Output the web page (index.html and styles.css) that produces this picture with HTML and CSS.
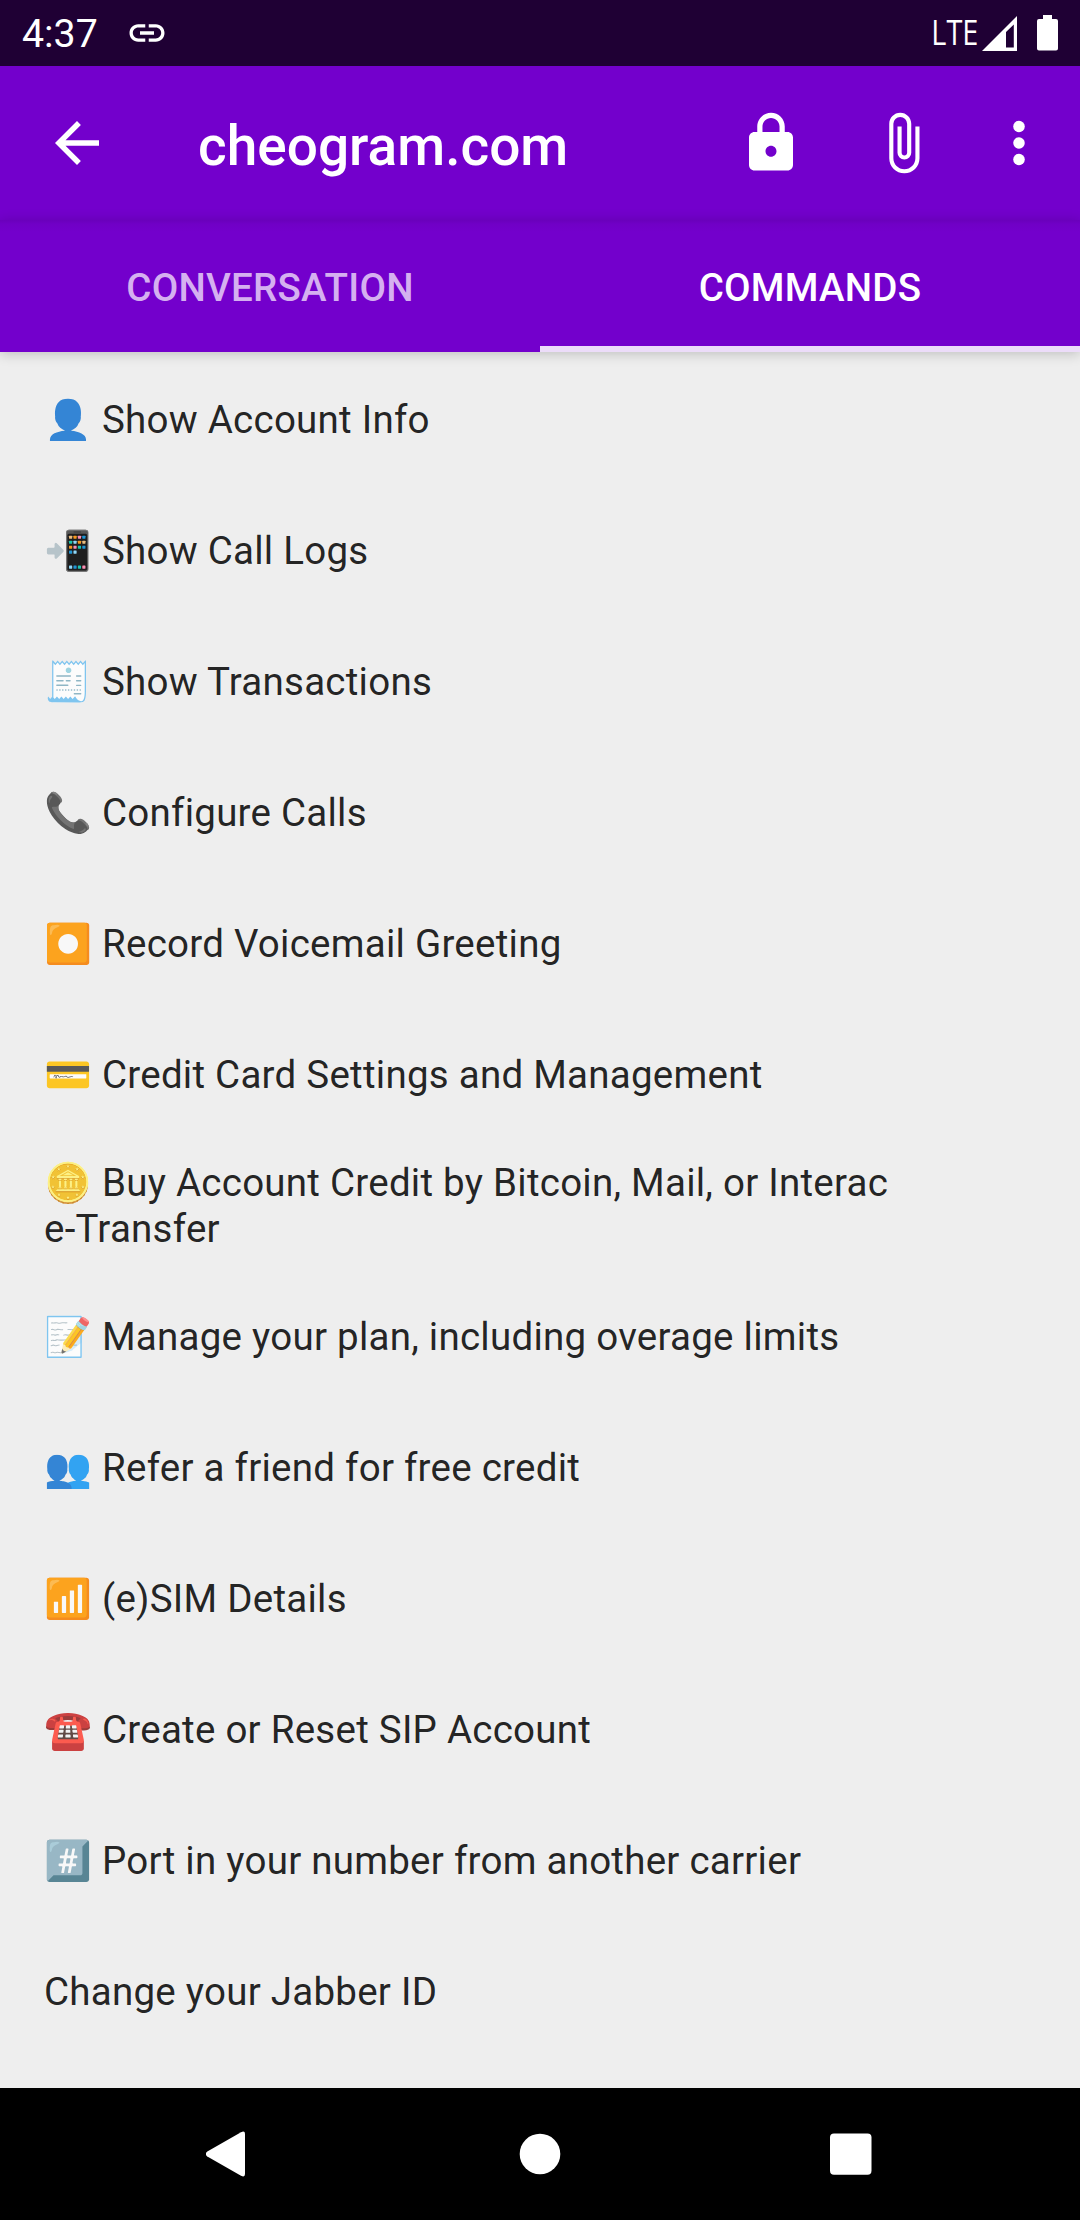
FILE: index.html
```html
<!DOCTYPE html>
<html lang="en">
<head>
<meta charset="utf-8">
<title>cheogram.com</title>
<link rel="stylesheet" href="styles.css">
</head>
<body>
<header class="status">
  <span class="clock">4:37</span>
  <svg class="link" viewBox="0 0 24 24"><path d="M3.900 12c0-1.710 1.390-3.100 3.100-3.100h4V7H7c-2.760 0-5 2.240-5 5s2.240 5 5 5h4v-1.900H7c-1.710 0-3.100-1.390-3.100-3.100zM8 13h8v-2H8v2zm9-6h-4v1.900h4c1.710 0 3.100 1.390 3.100 3.100s-1.390 3.100-3.100 3.100h-4V17h4c2.760 0 5-2.240 5-5s-2.240-5-5-5z"/></svg>
  <span class="lte">LTE</span>
  <svg class="signal" viewBox="0 0 35 35"><path fill-rule="evenodd" d="M0 35 35 0V35ZM24 31.500H31.800V8.500L24 16Z"/></svg>
  <svg class="battery" viewBox="0 0 21 36"><path d="M6 0h9v4h4a2 2 0 0 1 2 2v27.500a2 2 0 0 1-2 2H2a2 2 0 0 1-2-2V6a2 2 0 0 1 2-2h4z"/></svg>
</header>
<div class="toolbar">
  <svg class="icon" viewBox="0 0 24 24"><path d="M20 11H7.830l5.590-5.590L12 4l-8 8 8 8 1.410-1.410L7.830 13H20v-2z"/></svg>
  <h1 class="title">cheogram.com</h1>
  <svg class="icon lock" viewBox="0 0 24 24"><path d="M18 8h-1V6c0-2.760-2.240-5-5-5S7 3.240 7 6v2H6c-1.100 0-2 .9-2 2v10c0 1.100.9 2 2 2h12c1.100 0 2-.9 2-2V10c0-1.100-.9-2-2-2zm-6 9c-1.100 0-2-.9-2-2s.9-2 2-2 2 .9 2 2-.9 2-2 2zm3.100-9H8.900V6c0-1.710 1.390-3.100 3.100-3.100s3.100 1.390 3.100 3.100v2z"/></svg>
  <svg class="icon clip" viewBox="0 0 24 24"><path d="M16.500 6v11.500c0 2.210-1.790 4-4 4s-4-1.790-4-4V5a2.500 2.500 0 0 1 5 0v10.500c0 .55-.45 1-1 1s-1-.45-1-1V6H10v9.500a2.500 2.500 0 0 0 5 0V5c0-2.210-1.790-4-4-4S7 2.790 7 5v12.500c0 3.040 2.460 5.500 5.500 5.500s5.500-2.460 5.500-5.500V6h-1.500z"/></svg>
  <svg class="icon" viewBox="0 0 24 24"><circle cx="12" cy="6" r="2.100"/><circle cx="12" cy="12" r="2.100"/><circle cx="12" cy="18" r="2.100"/></svg>
</div>
<nav class="tabs">
  <span class="tab">CONVERSATION</span>
  <span class="tab active">COMMANDS</span>
</nav>
<main class="list">
  <div class="row"><p>👤 Show Account Info</p></div>
  <div class="row"><p>📲 Show Call Logs</p></div>
  <div class="row"><p>🧾 Show Transactions</p></div>
  <div class="row"><p>📞 Configure Calls</p></div>
  <div class="row"><p>⏺️ Record Voicemail Greeting</p></div>
  <div class="row"><p>💳 Credit Card Settings and Management</p></div>
  <div class="row"><p>🪙 Buy Account Credit by Bitcoin, Mail, or Interac <span class="word">e-Transfer</span></p></div>
  <div class="row"><p>📝 Manage your plan, including overage limits</p></div>
  <div class="row"><p>👥 Refer a friend for free credit</p></div>
  <div class="row"><p>📶 (e)SIM Details</p></div>
  <div class="row"><p>☎️ Create or Reset SIP Account</p></div>
  <div class="row"><p>#️⃣ Port in your number from another carrier</p></div>
  <div class="row"><p>Change your Jabber ID</p></div>
</main>
<footer class="navbar">
  <svg viewBox="0 0 46 46"><path d="M1.300 20.500 35 1.300q4-2 4 1.700v40q0 3.700-4 1.700L1.300 25.500q-3-2.500 0-5z"/></svg>
  <svg viewBox="0 0 46 46"><circle cx="23" cy="23" r="20.300"/></svg>
  <svg viewBox="0 0 46 46"><rect x="2" y="2.500" width="41.500" height="41.300" rx="4"/></svg>
</footer>
</body>
</html>
```
FILE: styles.css
```css
* { box-sizing: border-box; }
body {
  margin: 0;
  width: 1080px;
  height: 2220px;
  display: flex;
  flex-direction: column;
  background: #eee;
  font-family: Roboto, "Noto Color Emoji", sans-serif;
  overflow: hidden;
}
svg { fill: #fff; flex: none; display: block; }
.status {
  height: 66px;
  flex: none;
  display: flex;
  align-items: center;
  padding: 0 22px;
  background: #1f0034;
  color: #fff;
}
.clock { font-size: 39.300px; line-height: 64px; width: 104px; padding-top: 2px; }
.link { width: 42px; height: 42px; margin-right: auto; }
.lte {
  font-size: 34px;
  font-family: "Open Sans", sans-serif;
  margin: 0 4px 3px 0;
  transform: scaleX(.85);
  transform-origin: right;
}
.signal { width: 35px; height: 35px; margin-right: 20px; }
.battery { width: 21px; height: 36px; }
.toolbar {
  height: 154px;
  flex: none;
  display: flex;
  align-items: center;
  padding: 0 28px 0 44px;
  background: #7300cc;
  color: #fff;
}
.icon { width: 66px; height: 66px; }
.title { margin: 5px auto 0 88px; font-size: 55px; font-weight: 500; line-height: 64px; }
.lock { margin-right: 66px; }
.clip { margin-right: 50px; }
.tabs {
  height: 132px;
  flex: none;
  display: flex;
  background: linear-gradient(#6a00bb, #7000c6 4px, #7300cc 12px);
  box-shadow: 0 2px 12px rgba(0, 0, 0, .2);
  color: #fff;
  font-size: 38.500px;
  font-weight: 500;
  letter-spacing: .25px;
}
.tab {
  flex: 1;
  display: flex;
  align-items: center;
  justify-content: center;
  padding-top: 8px;
  border-bottom: 6px solid transparent;
  color: #d5b0f0;
}
.active { color: #fff; border-color: #ecdcf9; }
.list { flex: 1; padding: 2px 44px 0; color: rgba(0, 0, 0, .87); }
.row { height: 131px; display: flex; align-items: center; }
.row p { margin: 0; font-size: 38.500px; line-height: 46px; letter-spacing: .25px; }
.word { white-space: nowrap; }
.navbar {
  height: 132px;
  flex: none;
  display: flex;
  align-items: center;
  justify-content: space-between;
  padding: 0 206px;
  background: #000;
}
.navbar svg { width: 46px; height: 46px; }
```
